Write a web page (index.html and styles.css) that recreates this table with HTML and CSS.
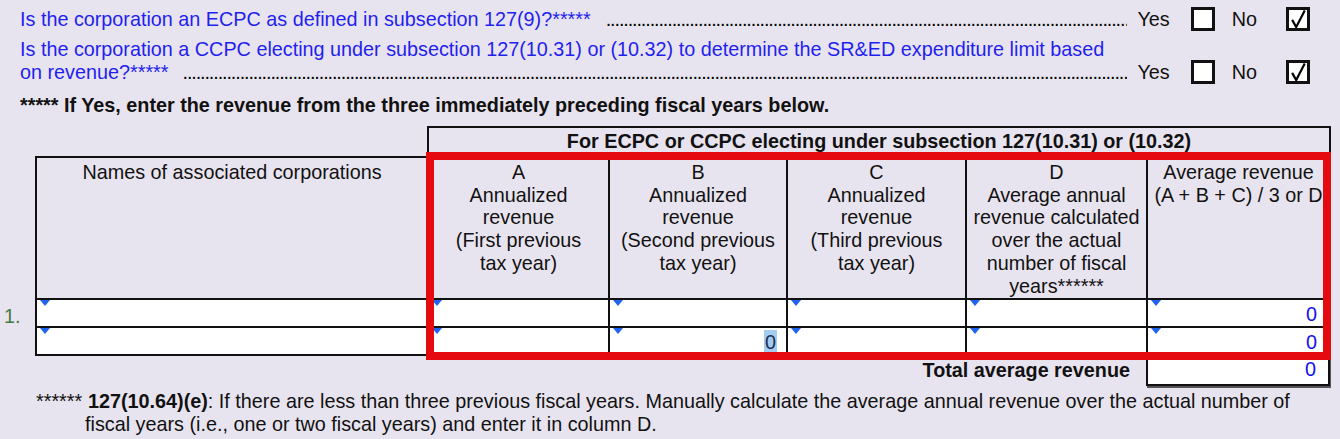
FILE: index.html
```html
<!DOCTYPE html>
<html lang="en">
<head>
<meta charset="utf-8">
<title>Associated corporations revenue</title>
<link rel="stylesheet" href="styles.css">
</head>
<body>
<div class="form">
  <div class="q q1">
    <span class="qtext">Is the corporation an ECPC as defined in subsection 127(9)?*****</span>
    <span class="leader"></span>
    <span class="yn yes">Yes</span>
    <span class="cb"></span>
    <span class="yn no">No</span>
    <span class="cb"><svg viewBox="0 0 20 20" width="20" height="20"><path d="M3.5 11 L8 19 L17.5 0.5" fill="none" stroke="#000" stroke-width="2.4" stroke-linejoin="miter"/></svg></span>
  </div>
  <div class="qline">Is the corporation a CCPC electing under subsection 127(10.31) or (10.32) to determine the SR&amp;ED expenditure limit based</div>
  <div class="q q2">
    <span class="qtext">on revenue?*****</span>
    <span class="leader"></span>
    <span class="yn yes">Yes</span>
    <span class="cb"></span>
    <span class="yn no">No</span>
    <span class="cb"><svg viewBox="0 0 20 20" width="20" height="20"><path d="M3.5 11 L8 19 L17.5 0.5" fill="none" stroke="#000" stroke-width="2.4" stroke-linejoin="miter"/></svg></span>
  </div>
  <p class="note">***** If Yes, enter the revenue from the three immediately preceding fiscal years below.</p>

  <div class="table-wrap">
    <table class="grid">
      <colgroup>
        <col class="c-label"><col class="c-name"><col class="c-a"><col class="c-b"><col class="c-c"><col class="c-d"><col class="c-avg">
      </colgroup>
      <tr class="r-super">
        <td class="blank"></td>
        <td class="blank"></td>
        <th class="super" colspan="5">For ECPC or CCPC electing under subsection 127(10.31) or (10.32)</th>
      </tr>
      <tr class="r-head">
        <td class="blank"></td>
        <th class="head">Names of associated corporations</th>
        <th class="head">A<br>Annualized<br>revenue<br>(First previous<br>tax year)</th>
        <th class="head">B<br>Annualized<br>revenue<br>(Second previous<br>tax year)</th>
        <th class="head">C<br>Annualized<br>revenue<br>(Third previous<br>tax year)</th>
        <th class="head">D<br>Average annual<br>revenue calculated<br>over the actual<br>number of fiscal<br>years******</th>
        <th class="head">Average revenue<br>(A + B + C) / 3 or D</th>
      </tr>
      <tr class="r-in">
        <td class="num">1.</td>
        <td class="in"><i class="tri"></i></td>
        <td class="in"><i class="tri"></i></td>
        <td class="in"><i class="tri"></i></td>
        <td class="in"><i class="tri"></i></td>
        <td class="in"><i class="tri"></i></td>
        <td class="in val"><i class="tri"></i>0</td>
      </tr>
      <tr class="r-in">
        <td class="blank"></td>
        <td class="in"><i class="tri"></i></td>
        <td class="in"><i class="tri"></i></td>
        <td class="in val sel-cell"><i class="tri"></i><span class="sel">0</span></td>
        <td class="in"><i class="tri"></i></td>
        <td class="in"><i class="tri"></i></td>
        <td class="in val"><i class="tri"></i>0</td>
      </tr>
      <tr class="r-total">
        <td class="total-label" colspan="6">Total average revenue</td>
        <td class="total"><div class="total-box">0</div></td>
      </tr>
    </table>
    <div class="highlight"></div>
  </div>

  <div class="footnote">
    <span class="fn-mark">******</span>
    <p class="fn-body"><b>127(10.64)(e)</b>: If there are less than three previous fiscal years. Manually calculate the average annual revenue over the actual number of fiscal years (i.e., one or two fiscal years) and enter it in column D.</p>
  </div>
</div>
</body>
</html>
```

FILE: styles.css
```css
* { box-sizing: border-box; }

html, body {
  margin: 0;
  padding: 0;
  background: #e8e4ef;
}

body {
  width: 1340px;
  height: 439px;
  overflow: hidden;
  font-family: "Liberation Sans", Arial, sans-serif;
  font-size: 19.8px;
  color: #111;
}

.form {
  padding-top: 2px;
}

/* Questions */
.q {
  display: flex;
  align-items: center;
  padding: 0 30px 0 20px;
  line-height: 23px;
}

.q1 { height: 34px; }

.qline {
  padding: 2px 0 0 20px;
  line-height: 22px;
  color: #1f1fef;
}

.q2 { height: 24px; }

.qtext {
  color: #1f1fef;
  white-space: nowrap;
}

.q1 .qtext { margin-right: 15px; }
.q2 .qtext { margin-right: 14px; }

.leader {
  flex: 1;
  overflow: hidden;
  white-space: nowrap;
  color: #000;
  letter-spacing: -1.1px;
  line-height: 23px;
}

.leader::after {
  content: "............................................................................................................................................................................................................................................................................................................................................";
}

.yn { white-space: nowrap; color: #111; }
.yes { margin-left: 10px; }
.no { margin-left: 17px; }

.cb {
  display: flex;
  align-items: center;
  justify-content: center;
  width: 24px;
  height: 24px;
  margin-left: 21px;
  background: #fff;
  border: 3px solid #111;
  overflow: hidden;
}

.no + .cb { margin-left: 29px; }

/* Note */
.note {
  margin: 10px 0 0 20px;
  font-weight: bold;
  line-height: 22px;
}

/* Table */
.table-wrap {
  position: relative;
  margin-top: 10px;
}

.grid {
  border-collapse: collapse;
  table-layout: fixed;
  width: 1330px;
}

.c-label { width: 36px; }
.c-name { width: 392px; }
.c-a { width: 181px; }
.c-b { width: 178px; }
.c-c { width: 179px; }
.c-d { width: 181px; }
.c-avg { width: 183px; }

.grid td, .grid th {
  padding: 0;
}

.blank { border: none; }

.super {
  height: 30px;
  border: 2px solid #111;
  font-weight: bold;
  text-align: center;
  vertical-align: middle;
  line-height: 22px;
  padding-bottom: 2px !important;
}

.head {
  height: 142px;
  border: 2px solid #111;
  font-weight: normal;
  text-align: center;
  vertical-align: top;
  line-height: 22.7px;
  padding-top: 3px !important;
  color: #111;
}

.r-in td { height: 28px; }

.in {
  position: relative;
  background: #fff;
  border: 2px solid #111;
}

.tri {
  position: absolute;
  left: 3px;
  top: 0;
  width: 0;
  height: 0;
  border-left: 5px solid transparent;
  border-right: 5px solid transparent;
  border-top: 6px solid #1f63f0;
}

.val {
  text-align: right;
  padding-right: 12px !important;
  color: #1010ee;
  line-height: 24px;
  vertical-align: bottom;
}

.sel-cell { padding-right: 9px !important; }

.sel {
  background: #a3cdf0;
  color: #1e2f55;
  padding: 1px 1px;
}

.num {
  color: #3f7d3a;
  vertical-align: bottom;
  padding-left: 4px !important;
  line-height: 22px;
}

.r-total td { height: 30px; }

.total-label {
  text-align: right;
  font-weight: bold;
  padding-right: 17px !important;
  vertical-align: top;
  line-height: 28px;
}

.total {
  vertical-align: top;
  padding: 0 !important;
}

.total-box {
  height: 30px;
  margin-left: -1px;
  background: #fff;
  border: 2px solid #111;
  border-top: none;
  box-shadow: 1px 2px 0 #555;
  text-align: right;
  padding-right: 12px;
  color: #1010ee;
  line-height: 26px;
}

.highlight {
  position: absolute;
  left: 426px;
  top: 26px;
  width: 905px;
  height: 208px;
  border: 8px solid #e50a10;
  pointer-events: none;
}

/* Footnote */
.footnote {
  display: flex;
  margin-top: 4px;
  padding: 0 30px 0 36px;
  line-height: 23px;
}

.fn-mark {
  flex: none;
  width: 49px;
}

.fn-body {
  flex: 1;
  margin: 0;
  text-indent: 3px;
}
```
